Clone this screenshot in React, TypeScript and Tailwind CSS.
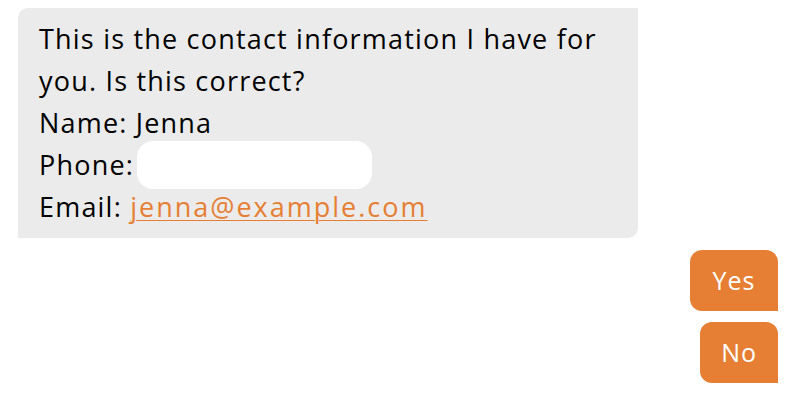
export default function App() {
  return (
    <div className="min-h-[404px] w-[796px] bg-white px-[18px] pt-[8px] font-['Open_Sans',sans-serif] text-black">
      <div className="flex flex-col gap-[12px]">
        <div className="w-[620px] rounded-tl-[10px] rounded-br-[10px] bg-[#ebebeb] px-[21px] py-[10px] text-[27px] leading-[42px] tracking-[1.2px]">
          <div>This is the contact information I have for you. Is this correct?</div>
          <div>Name: Jenna</div>
          <div className="flex h-[42px] items-center">
            <span>Phone:</span>
            <span className="ml-[3px] h-[48px] w-[235px] shrink-0 rounded-[16px] bg-white" />
          </div>
          <div>
            Email:{' '}
            <a href="#" className="tracking-[2px] text-[#e67f33] underline decoration-1 underline-offset-[3px]">
              jenna@example.com
            </a>
          </div>
        </div>
        <div className="flex flex-col items-end gap-[11px]">
          <button className="h-[61px] rounded-tl-[12px] rounded-tr-[12px] rounded-bl-[12px] bg-[#e67f33] px-[22.5px] text-[25px] tracking-[1px] text-white">
            Yes
          </button>
          <button className="h-[61px] rounded-tl-[12px] rounded-tr-[12px] rounded-bl-[12px] bg-[#e67f33] px-[21px] text-[25px] tracking-[1px] text-white">
            No
          </button>
        </div>
      </div>
    </div>
  );
}
